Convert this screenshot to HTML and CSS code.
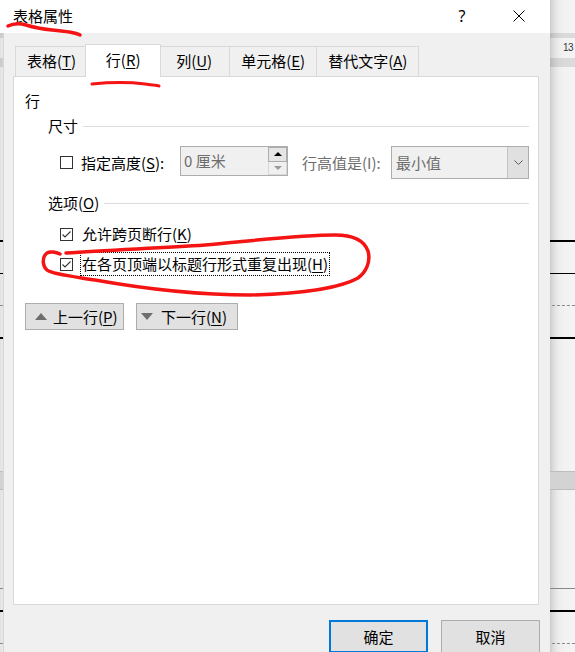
FILE: index.html
```html
<!DOCTYPE html>
<html lang="zh-CN">
<head>
<meta charset="utf-8">
<title>表格属性</title>
<link rel="stylesheet" href="styles.css">
</head>
<body>
<div class="doc">
  <div class="doc-band doc-band-a"></div>
  <div class="doc-ruler">13</div>
  <div class="doc-band doc-band-b"></div>
  <div class="rule rule-thick r1"></div>
  <div class="rule rule-thin r2"></div>
  <div class="rule rule-dash r3"></div>
  <div class="rule rule-thick r4"></div>
  <div class="doc-box"></div>
  <div class="rule rule-gray r5"></div>
  <div class="rule rule-thick r6"></div>
  <div class="rule rule-dash r7"></div>
</div>

<div class="dialog">
  <div class="titlebar">
    <div class="title">表格属性</div>
    <div class="help">?</div>
    <div class="close">
      <svg width="12" height="12" viewBox="0 0 12 12"><path d="M0.5 0.5 L11.5 11.5 M11.5 0.5 L0.5 11.5" stroke="#000" stroke-width="1" fill="none"/></svg>
    </div>
  </div>
  <div class="dlg-body">
    <div class="tabs">
      <div class="tab">表格(<u>T</u>)</div>
      <div class="tab active">行(<u>R</u>)</div>
      <div class="tab">列(<u>U</u>)</div>
      <div class="tab">单元格(<u>E</u>)</div>
      <div class="tab">替代文字(<u>A</u>)</div>
    </div>
    <div class="panel">
      <div class="panel-title">行</div>
      <div class="group-head"><span>尺寸</span><div class="sep"></div></div>
      <div class="size-row">
        <span class="cb"></span>
        <span class="lbl lbl-size">指定高度(<u>S</u>):</span>
        <div class="spin">
          <span class="spin-val">0 厘米</span>
          <div class="spin-btns">
            <div class="spin-up"><svg width="8" height="4" viewBox="0 0 8 4"><polygon points="0,4 4,0 8,4" fill="#000"/></svg></div>
            <div class="spin-down"><svg width="8" height="4" viewBox="0 0 8 4"><polygon points="0,0 8,0 4,4" fill="#9a9a9a"/></svg></div>
          </div>
        </div>
        <span class="lbl dis lbl-rule">行高值是(I):</span>
        <div class="select">
          <span class="select-val">最小值</span>
          <div class="select-btn"><svg width="9" height="5" viewBox="0 0 9 5"><polyline points="0.5,0.5 4.5,4.5 8.5,0.5" fill="none" stroke="#5a5a5a" stroke-width="1"/></svg></div>
        </div>
      </div>
      <div class="group-head group-opts"><span>选项(<u>O</u>)</span><div class="sep"></div></div>
      <div class="opt-row">
        <span class="cb"><svg width="11" height="11" viewBox="0 0 11 11"><polyline points="1.5,5.5 4,8 9.5,2.5" fill="none" stroke="#333" stroke-width="1.1"/></svg></span>
        <span class="lbl opt-lbl">允许跨页断行(<u>K</u>)</span>
      </div>
      <div class="opt-row opt-row-2">
        <span class="cb"><svg width="11" height="11" viewBox="0 0 11 11"><polyline points="1.5,5.5 4,8 9.5,2.5" fill="none" stroke="#333" stroke-width="1.1"/></svg></span>
        <span class="lbl opt-lbl focus">在各页顶端以标题行形式重复出现(<u>H</u>)</span>
      </div>
      <div class="nav-row">
        <button class="btn nav nav-prev"><svg width="12" height="7" viewBox="0 0 12 7"><polygon points="0,7 6,0 12,7" fill="#6e6e6e"/></svg><span>上一行(<u>P</u>)</span></button>
        <button class="btn nav nav-next"><svg width="12" height="7" viewBox="0 0 12 7"><polygon points="0,0 12,0 6,7" fill="#6e6e6e"/></svg><span>下一行(<u>N</u>)</span></button>
      </div>
    </div>
    <div class="footer">
      <button class="btn btn-foot btn-ok">确定</button>
      <button class="btn btn-foot btn-cancel">取消</button>
    </div>
  </div>
</div>

<svg class="marks" width="575" height="652" viewBox="0 0 575 652">
  <path d="M8 26 C 12 24, 18 22.5, 26 25 S 42 29, 52 30 S 68 31.5, 74 33 S 79 34.5, 80 35" stroke="#f41414" stroke-width="3.5" fill="none" stroke-linecap="round"/>
  <path d="M92 84 C 108 82.5, 128 82, 145 84 S 156 85.5, 159 86" stroke="#f41414" stroke-width="3" fill="none" stroke-linecap="round"/>
  <path d="M66 253 C 110 250, 160 248, 205 245 C 250 241, 300 235, 335 235 C 352 235, 364 240, 368 251 C 371 262, 366 272, 358 278 C 340 288, 300 294, 250 295 C 200 295, 140 288, 95 280 C 70 276, 52 274, 47 270 C 42 265, 42 257, 47 253 C 50 251, 56 252, 60 254" stroke="#f41414" stroke-width="3.5" fill="none" stroke-linecap="round" stroke-linejoin="round"/>
</svg>
</body>
</html>
```

FILE: styles.css
```css
*, *::before, *::after {
  box-sizing: border-box;
}

html, body {
  margin: 0;
  padding: 0;
}

body {
  width: 575px;
  height: 652px;
  overflow: hidden;
  position: relative;
  background: #f3f3f3;
  font-family: "Noto Sans CJK SC", "Noto Sans", sans-serif;
  font-size: 15px;
  color: #000;
}

u {
  text-decoration: underline;
  text-decoration-thickness: 1px;
  text-underline-offset: 2px;
}

/* ---------- document behind the dialog ---------- */
.doc {
  height: 652px;
  display: flex;
  flex-direction: column;
  background: linear-gradient(to right,
    #e2e2e2 0, #e9e9e9 3px, #f3f3f3 3px, #f3f3f3 549px,
    #c6c6c6 549px, #dcdcdc 553px, #ececec 558px, #f2f2f2 564px, #f4f4f4 575px);
}

.doc-band {
  flex: none;
  background: rgba(0, 0, 0, 0.1);
}

.doc-band-a {
  margin-top: 33px;
  height: 5px;
}

.doc-band-b {
  height: 9px;
}

.doc-ruler {
  flex: none;
  height: 20px;
  line-height: 20px;
  padding-left: 563px;
  font-family: "Liberation Sans", sans-serif;
  font-size: 10px;
  letter-spacing: -0.5px;
  color: #333;
  white-space: nowrap;
}

.rule {
  flex: none;
}

.rule-thick {
  height: 2px;
  background: #000;
}

.rule-thin {
  height: 1px;
  background: #000;
}

.rule-gray {
  height: 1px;
  background: #888;
}

.rule-dash {
  height: 0;
  border-top: 1px dashed #8a8a8a;
}

.r1 { margin-top: 173px; }
.r2 { margin-top: 31px; }
.r3 { margin-top: 31px; }
.r4 { margin-top: 31px; }
.r5 { margin-top: 98px; }
.r6 { margin-top: 21px; }
.r7 { margin-top: 31px; }

.doc-box {
  flex: none;
  margin-top: 132px;
  height: 19px;
  background: #d3d3d3;
  border-top: 1px solid #bdbdbd;
  border-bottom: 1px solid #bdbdbd;
}

/* ---------- dialog window ---------- */
.dialog {
  position: absolute;
  top: 0;
  left: 0;
  width: 550px;
  height: 652px;
  display: flex;
  flex-direction: column;
}

.titlebar {
  flex: none;
  height: 33px;
  background: #fff;
  display: flex;
  align-items: center;
}

.title {
  flex: 1;
  padding-left: 13px;
  line-height: 20px;
  margin-top: -2px;
}

.help {
  width: 46px;
  text-align: center;
  font-family: "Noto Sans", sans-serif;
  font-size: 16px;
  line-height: 20px;
  margin-top: -2px;
}

.close {
  width: 46px;
  margin-left: 11px;
  margin-right: 8px;
  display: flex;
  justify-content: center;
  margin-top: -2px;
}

.close svg {
  display: block;
}

.dlg-body {
  flex: 1;
  margin-left: 3px;
  border-left: 1px solid #d6d6d6;
  background: #f0f0f0;
  padding: 11px 11px 0 9px;
  display: flex;
  flex-direction: column;
}

/* tabs */
.tabs {
  flex: none;
  height: 32px;
  display: flex;
  align-items: flex-end;
  padding-left: 2px;
  position: relative;
  z-index: 1;
}

.tab {
  height: 30px;
  min-width: 72px;
  padding: 0 11px;
  margin-left: -1px;
  border: 1px solid #d9d9d9;
  border-bottom: none;
  background: #f0f0f0;
  text-align: center;
  line-height: 28px;
  white-space: nowrap;
}

.tab:first-child {
  margin-left: 0;
}

.tab.active {
  height: 33px;
  min-width: 76px;
  padding: 0 13px;
  margin: 0 -2px -1px -3px;
  background: #fff;
  line-height: 30px;
  position: relative;
  z-index: 2;
}

/* panel */
.panel {
  flex: none;
  height: 529px;
  border: 1px solid #d9d9d9;
  background: #fff;
  padding: 14px 9px 0 11px;
  display: flex;
  flex-direction: column;
}

.panel-title {
  line-height: 20px;
  height: 20px;
}

.group-head {
  margin-top: 5px;
  margin-left: 23px;
  height: 20px;
  line-height: 20px;
  display: flex;
  align-items: center;
  white-space: nowrap;
}

.group-opts {
  margin-top: 14px;
}

.sep {
  flex: 1;
  height: 1px;
  background: #dcdcdc;
  margin-left: 5px;
}

.size-row {
  margin-top: 10px;
  height: 33px;
  display: flex;
  align-items: center;
}

.cb {
  flex: none;
  width: 13px;
  height: 13px;
  border: 1px solid #333;
  background: #fff;
  margin-left: 35px;
  display: flex;
  align-items: center;
  justify-content: center;
}

.cb svg {
  display: block;
}

.lbl {
  line-height: 20px;
  white-space: nowrap;
}

.lbl-size {
  width: 107px;
  padding-left: 8px;
}

.lbl-rule {
  width: 103px;
  padding-left: 14px;
}

.dis {
  color: #6d6d6d;
}

.spin {
  flex: none;
  width: 108px;
  height: 30px;
  border: 1px solid #adadad;
  background: #f0f0f0;
  display: flex;
  align-items: center;
  margin-top: -3px;
}

.spin-val {
  padding-left: 3px;
  color: #6d6d6d;
  line-height: 20px;
  flex: 1;
}

.spin-btns {
  width: 19px;
  height: 28px;
  display: flex;
  flex-direction: column;
}

.spin-up,
.spin-down {
  flex: 1;
  display: flex;
  align-items: center;
  justify-content: center;
}

.spin-up {
  background: #e5e5e5;
  border: 1px solid #adadad;
}

.spin-down {
  background: #f0f0f0;
  border: 1px solid #d8d8d8;
  border-top: none;
}

.spin svg,
.select svg {
  display: block;
}

.select {
  flex: none;
  width: 138px;
  height: 33px;
  border: 1px solid #adadad;
  background: #f0f0f0;
  display: flex;
  align-items: center;
}

.select-val {
  flex: 1;
  padding-left: 4px;
  color: #6d6d6d;
  line-height: 20px;
}

.select-btn {
  width: 21px;
  height: 31px;
  background: #e0e0e0;
  border-left: 1px solid #c4c4c4;
  display: flex;
  align-items: center;
  justify-content: center;
}

.opt-row {
  margin-top: 9px;
  height: 24px;
  display: flex;
  align-items: center;
}

.opt-row-2 {
  margin-top: 6px;
}

.opt-lbl {
  margin-left: 7px;
  padding: 0 1px;
  border: 1px dotted transparent;
  line-height: 22px;
}

.opt-lbl.focus {
  border-color: #000;
}

.nav-row {
  margin-top: 27px;
  display: flex;
}

.btn {
  font-family: inherit;
  font-size: 15px;
  color: #000;
  background: #e1e1e1;
  border: 1px solid #adadad;
  margin: 0;
  border-radius: 0;
  padding: 0;
}

.nav {
  height: 27px;
  display: flex;
  align-items: center;
  line-height: 20px;
}

.nav svg {
  display: block;
  flex: none;
}

.nav-prev {
  width: 99px;
  padding-left: 9px;
}

.nav-prev span {
  margin-left: 6px;
}

.nav-next {
  width: 102px;
  margin-left: 12px;
  padding-left: 4px;
}

.nav-next span {
  margin-left: 8px;
}

.footer {
  margin-top: 15px;
  margin-right: -1px;
  display: flex;
  justify-content: flex-end;
}

.btn-foot {
  width: 99px;
  height: 33px;
  line-height: 20px;
  text-align: center;
}

.btn-ok {
  border: 2px solid #0078d7;
}

.btn-cancel {
  margin-left: 13px;
}

/* hand-drawn red annotations */
.marks {
  position: absolute;
  top: 0;
  left: 0;
  pointer-events: none;
}
```
